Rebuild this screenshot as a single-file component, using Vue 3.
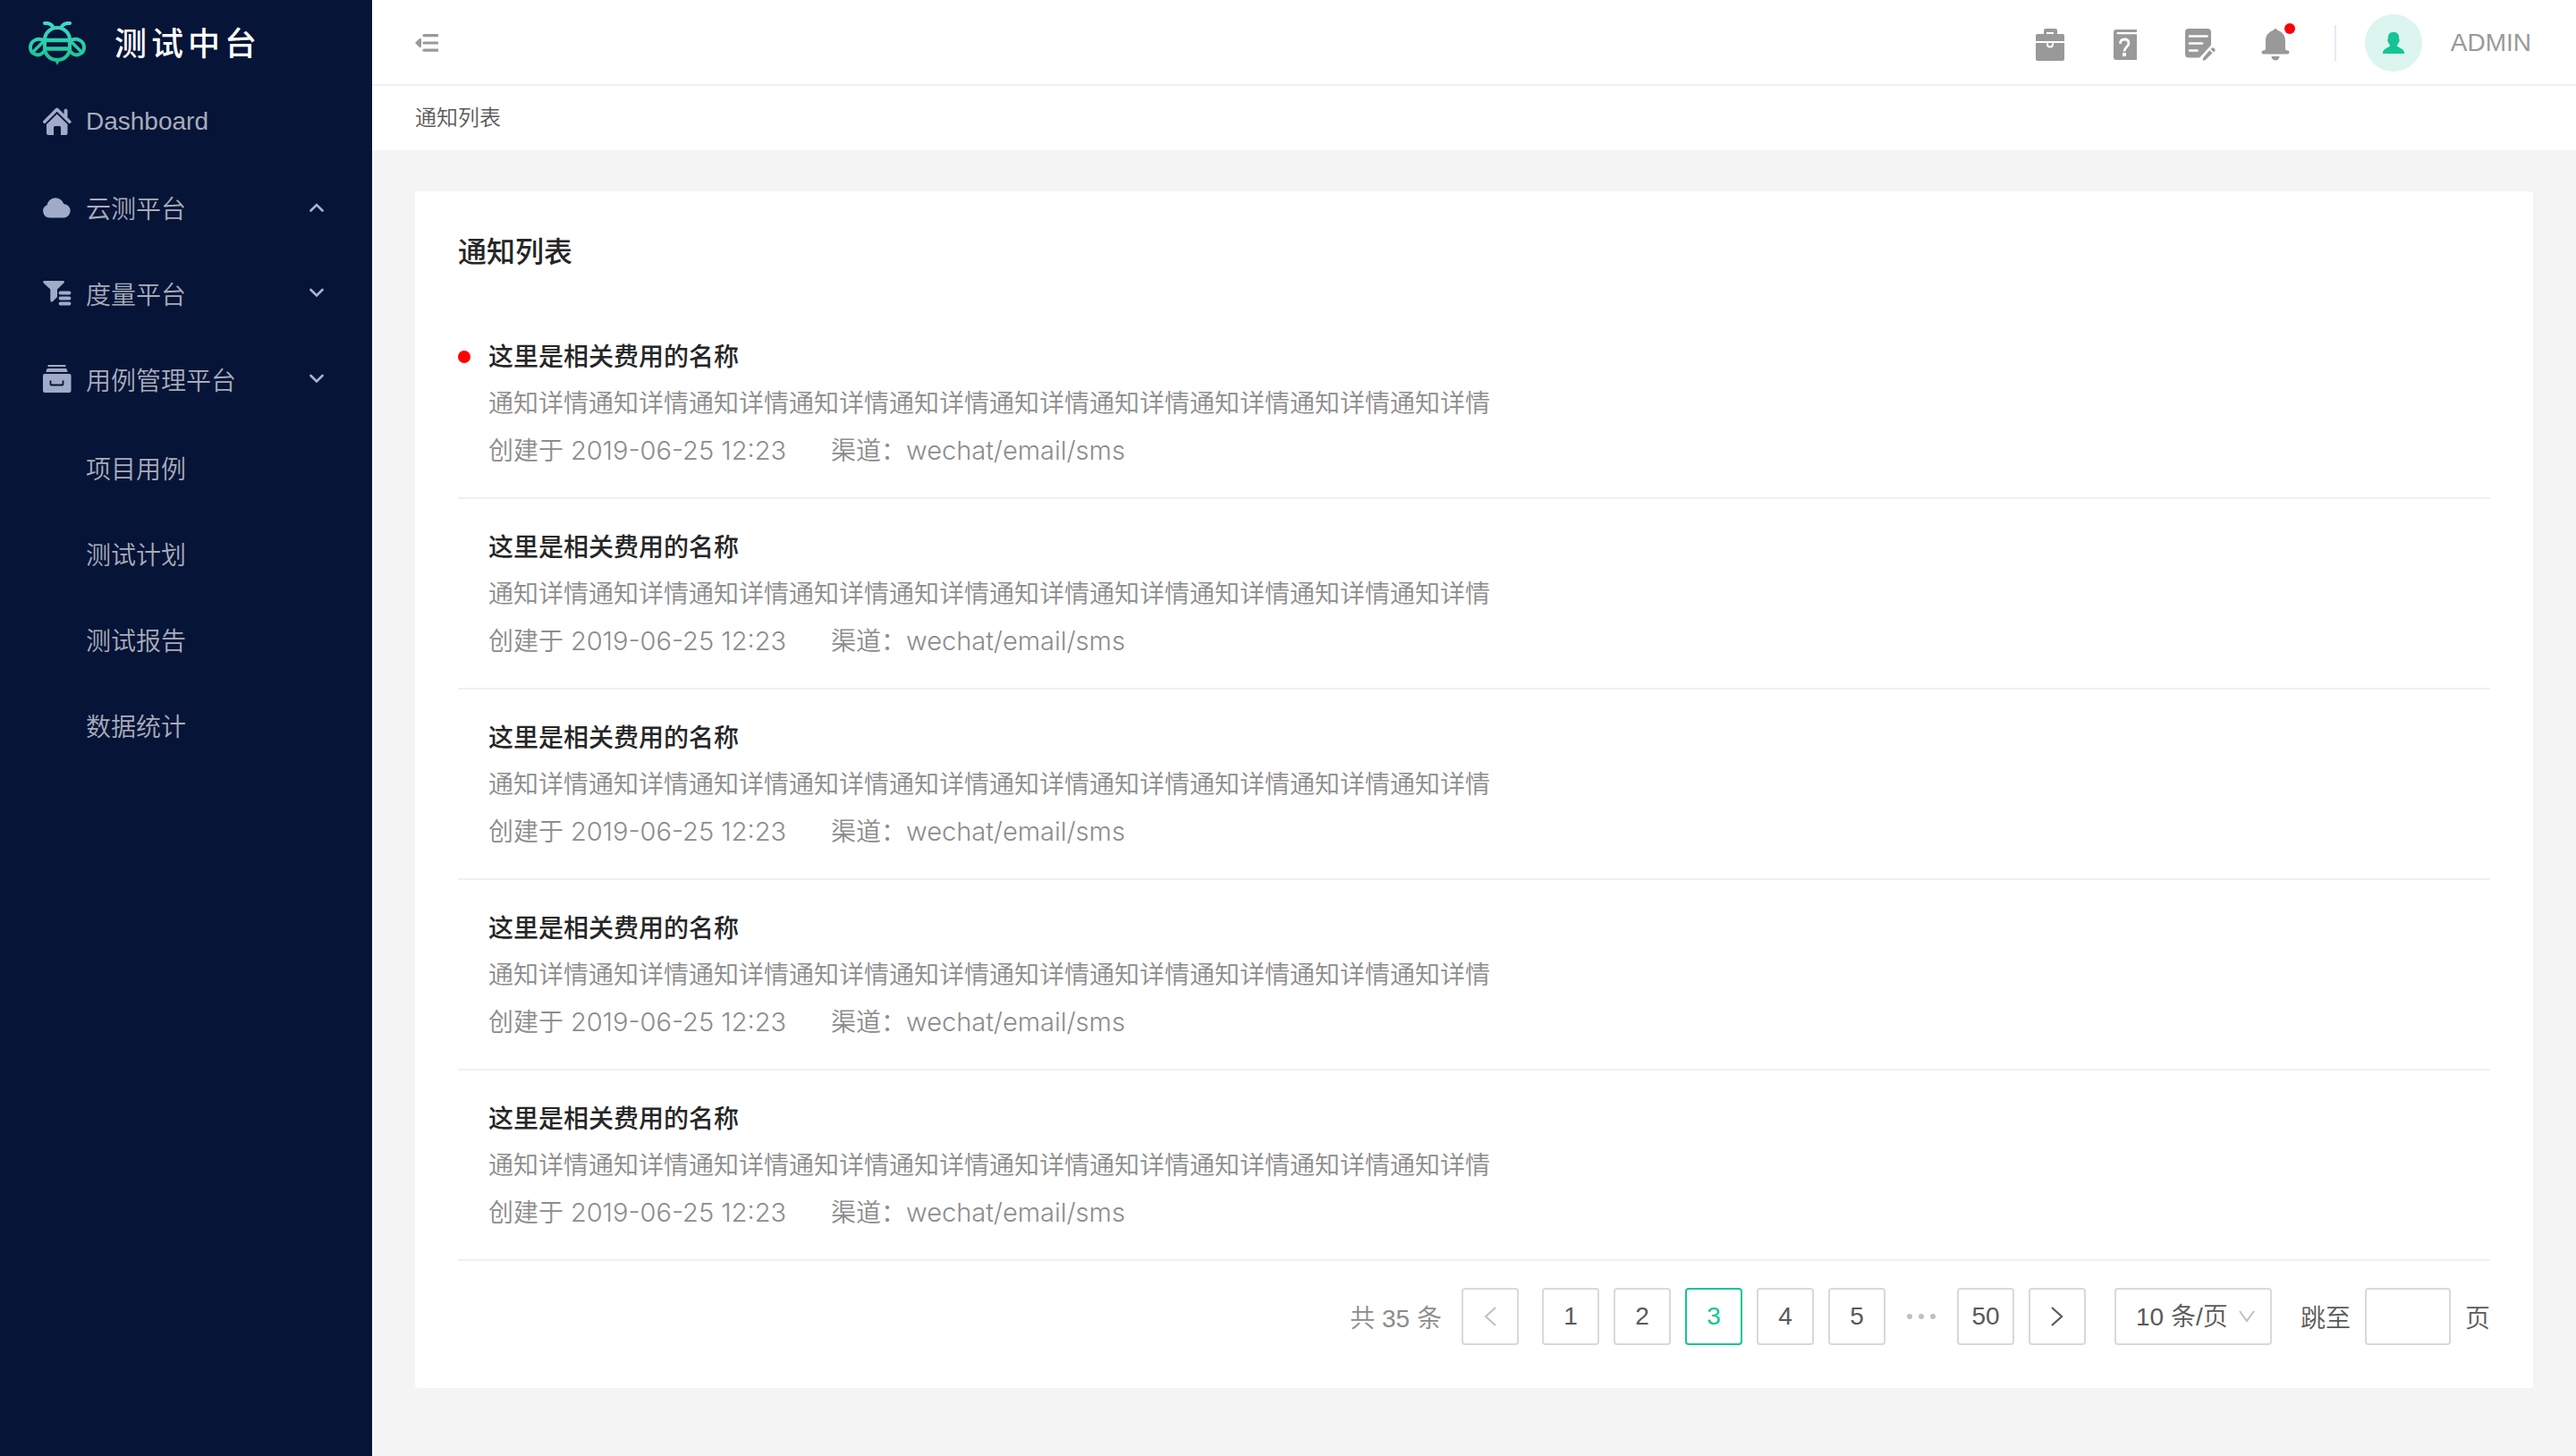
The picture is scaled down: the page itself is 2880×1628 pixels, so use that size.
<script setup>
import { ref } from 'vue'

const groups = [
  { label: 'Dashboard', icon: 'home' },
  { label: '云测平台', icon: 'cloud', arrow: 'up' },
  { label: '度量平台', icon: 'filter', arrow: 'down' },
  { label: '用例管理平台', icon: 'box', arrow: 'down' }
]
const children = ['项目用例', '测试计划', '测试报告', '数据统计']

const notices = Array.from({ length: 5 }, (_, i) => ({
  id: i + 1,
  unread: i === 0,
  title: '这里是相关费用的名称',
  detail: '通知详情'.repeat(10),
  time: '2019-06-25 12:23',
  channel: 'wechat/email/sms'
}))

const current = ref(3)
const pages = [1, 2, 3, 4, 5]
const pageSize = ref('10')
const jump = ref('')
</script>

<template>
  <div class="layout">
    <aside class="sidebar">
      <div class="brand">
        <svg class="bee" width="64" height="49" viewBox="0 0 64 49" fill="none" aria-hidden="true">
          <defs>
            <linearGradient id="bee" gradientUnits="userSpaceOnUse" x1="32" y1="0" x2="32" y2="49">
              <stop offset="0" stop-color="#42d8cb" />
              <stop offset="1" stop-color="#14c38a" />
            </linearGradient>
          </defs>
          <g stroke="url(#bee)" stroke-width="4" stroke-linecap="round">
            <path d="M18 20.5a14 13.5 0 0 1 28 0V30a14 13 0 0 1-28 0z" />
            <path d="M18 21h28M18 30.500h28" stroke-width="4.500" />
            <path d="M18 2c5-.5 8 1 9.500 5M46 2c-5-.5-8 1-9.500 5" />
            <path d="M18 21.500c-8-4-16 0-16 7.500s10 12.500 16 3.500M46 21.500c8-4 16 0 16 7.500s-10 12.500-16 3.500" />
            <path d="M6 33l10-10M58 33L48 23" stroke-width="3.500" />
          </g>
          <path d="M29.500 44h5L32 49z" fill="url(#bee)" />
        </svg>
        <span class="brand-name">测试中台</span>
      </div>

      <nav class="menu">
        <a v-for="g in groups" :key="g.label" class="menu-item" href="#">
          <svg class="menu-icon" width="32" height="32" viewBox="0 0 32 32" aria-hidden="true">
            <template v-if="g.icon === 'home'">
              <path d="M1.800 16.200L15.700 2.300 29.800 16.200" fill="none" stroke="currentColor" stroke-width="3.600" stroke-linecap="round" stroke-linejoin="round" />
              <path d="M24 8V3.500a1.500 1.500 0 0 1 3 0V11z" fill="currentColor" stroke="currentColor" />
              <path d="M4 19L15.700 7.500 27.500 19v10a2 2 0 0 1-2 2H20v-8.500a1.500 1.500 0 0 0-1.500-1.500h-5a1.500 1.500 0 0 0-1.500 1.500V31H6a2 2 0 0 1-2-2z" fill="currentColor" />
            </template>
            <path v-else-if="g.icon === 'cloud'" d="M7.500 27.500a7.500 7.500 0 0 1-3-14.300A9.700 9.700 0 0 1 23.300 12a7.800 7.800 0 0 1 .7 15.500z" fill="currentColor" />
            <template v-else-if="g.icon === 'filter'">
              <path d="M1.500 2h21c1.500 0 1.700 1.500.8 2.400L16 11.500V20l-5 5c-1.200 1-2.700.5-2.700-1V11.500L.7 4.400C-.2 3.500.2 2 1.500 2z" fill="currentColor" />
              <path d="M19.500 15.500h10M19.500 21.500h10M19.500 27.500h10" stroke="currentColor" stroke-width="3.800" stroke-linecap="round" />
            </template>
            <template v-else>
              <path d="M7 0h17a1 1 0 0 1 1 2H6a1 1 0 0 1 1-2zM5.500 4h20c1 0 2 2 2 4h-24c0-2 1-4 2-4z" fill="currentColor" />
              <path d="M2 10h27.500a2 2 0 0 1 2 2v17a2 2 0 0 1-2 2H2a2 2 0 0 1-2-2V12a2 2 0 0 1 2-2z" fill="currentColor" />
              <path d="M8.500 17.500v4a1 1 0 0 0 1 1h12a1 1 0 0 0 1-1v-4" fill="none" stroke="#061438" stroke-width="1.800" />
            </template>
          </svg>
          <span class="menu-label">{{ g.label }}</span>
          <svg v-if="g.arrow" width="16" height="12" viewBox="0 0 16 12" fill="none" aria-hidden="true">
            <path :d="g.arrow === 'up' ? 'M1.500 9.500L8 3l6.500 6.500' : 'M1.500 2L8 8.500 14.500 2'" stroke="#a9b4cb" stroke-width="2.600" stroke-linecap="round" />
          </svg>
        </a>
        <div class="submenu">
          <a v-for="c in children" :key="c" class="menu-item sub" href="#">{{ c }}</a>
        </div>
      </nav>
    </aside>

    <div class="main">
      <header class="topbar">
        <button class="icon-btn fold" type="button" aria-label="收起菜单">
          <svg width="26" height="20" viewBox="0 0 26 20" aria-hidden="true">
            <path d="M0 10l4.500-4.600C5.800 4.300 7 5 7 6.500v7c0 1.500-1.200 2.200-2.500 1.100z" fill="#999" />
            <path d="M10 1.700h15M10 10h15M10 18.200h15" stroke="#999" stroke-width="3.200" stroke-linecap="round" />
          </svg>
        </button>
        <div class="tools">
          <button class="icon-btn" type="button" aria-label="工具">
            <svg width="32" height="36" viewBox="0 0 32 36" aria-hidden="true">
              <path fill="#999" fill-rule="evenodd" d="M11 0h11a2 2 0 0 1 2 2v4h6a2 2 0 0 1 2 2v6H0V8a2 2 0 0 1 2-2h7V2a2 2 0 0 1 2-2zm1 4v2h8V4z" />
              <path fill="#999" d="M0 16h32v18a2 2 0 0 1-2 2H2a2 2 0 0 1-2-2z" />
              <path d="M13 15v2.500a3 3 0 0 0 6 0V15" fill="none" stroke="#fff" stroke-width="2" />
            </svg>
          </button>
          <button class="icon-btn" type="button" aria-label="帮助">
            <svg width="26" height="34" viewBox="0 0 26 34" aria-hidden="true">
              <path fill="#999" d="M3 0h23v3H4.500a1 1 0 0 0 0 2.200H26V34H3a3 3 0 0 1-3-3V3a3 3 0 0 1 3-3z" />
              <path d="M7.500 16c0-3 1.800-5 4.700-5s4.700 1.800 4.700 4.500c0 4-4.900 4.300-4.900 9" fill="none" stroke="#fff" stroke-width="2.800" />
              <path fill="#fff" d="M10 26h4v4h-4z" />
            </svg>
          </button>
          <button class="icon-btn" type="button" aria-label="记录">
            <svg width="34" height="36" viewBox="0 0 34 36" aria-hidden="true">
              <path fill="#999" d="M4 0h21a4 4 0 0 1 4 4v14.500L17.500 31c-1 1.200-2 1.500-3 1.500H4a4 4 0 0 1-4-4V4a4 4 0 0 1 4-4z" />
              <path d="M5 8.500h19.500M5 16.500h14M5 24.500h8.500" stroke="#fff" stroke-width="2.600" stroke-linecap="round" />
              <path fill="#999" d="M27.300 24.200l3.200 3.200-7.300 7.200c-1.200 1-2.400 1.300-3.400 1.100-.2-1.400.2-3 1.300-4.300zM28.500 23l1.600-1.600c1-1 4.600 2 3.400 3.400L32 26.400z" />
            </svg>
          </button>
          <button class="icon-btn" type="button" aria-label="通知">
            <svg width="32" height="36" viewBox="0 0 32 36" aria-hidden="true">
              <path fill="#999" d="M16 0c1 0 1.500.8 2.200 1.800C23.500 3.500 27 7.800 27 13v10c0 1 1 1.200 3 1.500 2 .5 2 4-.5 4H2.500c-2.500 0-2.500-3.500-.5-4 2-.3 3-.5 3-1.500V13C5 7.800 8.500 3.500 13.800 1.800 14.500.8 15 0 16 0zM11.500 31h9c-.3 2.500-2 4.500-4.500 4.500s-4.200-2-4.500-4.500z" />
            </svg>
            <span class="badge"></span>
          </button>
        </div>
        <span class="divider"></span>
        <a class="user" href="#">
          <span class="avatar">
            <svg width="24" height="24" viewBox="0 0 24 24" aria-hidden="true">
              <path fill="#15c495" d="M12 0c4 0 6 2 6 5.500 0 1 .2 2 .6 3.200.4 1.500-.6 2.300-1 3.300-.6 1.500-1.600 2-1.600 3 0 2 8 3 8 8v1H0v-1c0-5 8-6 8-8 0-1-1-1.500-1.600-3-.4-1-1.400-1.800-1-3.300.4-1.200.6-2.200.6-3.200C6 2 8 0 12 0z" />
            </svg>
          </span>
          <span>ADMIN</span>
        </a>
      </header>

      <div class="crumb">通知列表</div>

      <main class="content">
        <section class="card">
          <h1 class="card-title">通知列表</h1>
          <ul class="list">
            <li v-for="n in notices" :key="n.id" class="item">
              <span v-if="n.unread" class="dot"></span>
              <h2 class="item-title">{{ n.title }}</h2>
              <p class="item-text">{{ n.detail }}</p>
              <p class="item-text meta">
                <span>创建于 <span class="latin">{{ n.time }}</span></span>
                <span>渠道：<span class="latin">{{ n.channel }}</span></span>
              </p>
            </li>
          </ul>

          <div class="pager">
            <span class="total">共 35 条</span>
            <button class="page prev" type="button" aria-label="上一页">
              <svg width="14" height="22" viewBox="0 0 14 22" fill="none" aria-hidden="true"><path d="M13 1L2 11l11 10" stroke="#bfbfbf" stroke-width="2" /></svg>
            </button>
            <button v-for="p in pages" :key="p" class="page" :class="{ active: p === current }" type="button" @click="current = p">{{ p }}</button>
            <span class="more"><i></i><i></i><i></i></span>
            <button class="page" type="button">50</button>
            <button class="page" type="button" aria-label="下一页">
              <svg width="14" height="22" viewBox="0 0 14 22" fill="none" aria-hidden="true"><path d="M1 1l11 10L1 21" stroke="#595959" stroke-width="2.200" /></svg>
            </button>
            <span class="size">
              <select v-model="pageSize" aria-label="每页条数">
                <option value="10">10 条/页</option>
                <option value="20">20 条/页</option>
              </select>
              <svg class="caret" width="18" height="14" viewBox="0 0 18 14" fill="none" aria-hidden="true"><path d="M1 1l8 11 8-11" stroke="#bfbfbf" stroke-width="2" /></svg>
            </span>
            <label class="jump">
              <span>跳至</span>
              <input v-model="jump" type="text" />
              <span>页</span>
            </label>
          </div>
        </section>
      </main>
    </div>
  </div>
</template>

<style>
body {
  margin: 0;
  background: #f4f4f4;
}
</style>

<style scoped>
.layout {
  display: flex;
  min-height: 100vh;
  font-family: "Liberation Sans", "Noto Sans CJK SC", sans-serif;
  font-size: 28px;
  color: #595959;
  background: #f4f4f4;
}
.layout * {
  box-sizing: border-box;
}
a {
  color: inherit;
  text-decoration: none;
}
button,
input,
select {
  font: inherit;
  color: inherit;
}
svg {
  display: block;
  flex: none;
}

.sidebar {
  flex: none;
  width: 416px;
  background: #061438;
  color: #a8adb8;
}
.brand {
  display: flex;
  align-items: center;
  gap: 32px;
  height: 96px;
  padding-left: 32px;
  color: #fff;
}
.brand-name {
  padding-bottom: 4px;
  font-size: 36px;
  font-weight: 500;
  letter-spacing: 5px;
}
.menu {
  display: flex;
  flex-direction: column;
  margin-top: -8px;
  font-weight: 350;
}
.menu-item {
  display: flex;
  align-items: center;
  height: 96px;
  padding: 0 54px 0 48px;
}
.menu-icon {
  color: #9fabc7;
}
.menu-label {
  flex: 1;
  margin-left: 16px;
}
.submenu {
  padding-top: 3px;
}
.menu-item.sub {
  padding-left: 96px;
}

.main {
  flex: 1;
  min-width: 0;
}
.topbar {
  display: flex;
  align-items: center;
  height: 96px;
  padding: 0 50px 0 48px;
  background: #fff;
  box-shadow: inset 0 -2px #f0f0f0;
  color: #999;
}
.icon-btn {
  position: relative;
  display: flex;
  align-items: center;
  justify-content: center;
  width: 36px;
  height: 36px;
  padding: 0;
  border: 0;
  background: none;
}
.fold {
  width: 26px;
}
.tools {
  display: flex;
  gap: 48px;
  margin: 4px 48px 0 auto;
}
.badge {
  position: absolute;
  top: -6px;
  right: -4px;
  width: 12px;
  height: 12px;
  border-radius: 50%;
  background: #f00;
}
.divider {
  width: 2px;
  height: 40px;
  margin-right: 32px;
  background: #e4e9f4;
}
.user {
  display: flex;
  align-items: center;
  gap: 32px;
}
.avatar {
  display: flex;
  align-items: center;
  justify-content: center;
  width: 64px;
  height: 64px;
  border-radius: 50%;
  background: #dcf5ee;
}
.crumb {
  height: 72px;
  padding: 0 48px;
  background: #fff;
  font-size: 24px;
  font-weight: 350;
  line-height: 72px;
}

.content {
  padding: 46px 48px 48px;
}
.card {
  padding: 44px 48px 48px;
  border-radius: 4px;
  background: #fff;
}
.card-title {
  margin: 0 0 39px;
  font-size: 32px;
  line-height: 48px;
  font-weight: 500;
  color: #262626;
}
.list {
  margin: 0;
  padding: 0;
  list-style: none;
}
.item {
  position: relative;
  padding: 29px 0 26px 34px;
  border-bottom: 2px solid #f0f0f0;
  line-height: 52px;
}
.dot {
  position: absolute;
  top: 47px;
  left: 0;
  width: 14px;
  height: 14px;
  border-radius: 50%;
  background: #f00;
}
.item-title {
  margin: 0;
  font-size: 28px;
  line-height: 52px;
  font-weight: 500;
  color: #262626;
}
.item-text {
  margin: 0;
  font-weight: 350;
  color: #8c8c8c;
}
.meta {
  display: flex;
  gap: 50px;
  font-family: Inter, "Noto Sans CJK SC", sans-serif;
}
.latin {
  font-size: 29px;
  line-height: 1;
}

.pager {
  display: flex;
  align-items: center;
  justify-content: flex-end;
  gap: 16px;
  margin-top: 30px;
  font-weight: 350;
}
.total {
  margin-right: 6px;
  color: #8c8c8c;
}
.page {
  display: flex;
  align-items: center;
  justify-content: center;
  width: 64px;
  height: 64px;
  padding: 0;
  border: 2px solid #d9d9d9;
  border-radius: 4px;
  background: #fff;
}
.prev {
  margin-right: 10px;
}
.active {
  border-color: #15c495;
  color: #15c495;
}
.more {
  display: flex;
  justify-content: center;
  gap: 7px;
  width: 48px;
}
.more i {
  width: 6px;
  height: 6px;
  border-radius: 50%;
  background: #bfbfbf;
}
.size {
  position: relative;
  margin: 0 16px;
}
.size select {
  display: block;
  width: 176px;
  height: 64px;
  padding: 0 22px;
  border: 2px solid #d9d9d9;
  border-radius: 4px;
  background: #fff;
  appearance: none;
}
.caret {
  position: absolute;
  top: 25px;
  right: 19px;
  pointer-events: none;
}
.jump {
  display: flex;
  align-items: center;
  gap: 16px;
}
.jump input {
  width: 96px;
  height: 64px;
  padding: 0 16px;
  border: 2px solid #d9d9d9;
  border-radius: 4px;
  background: #fff;
}
</style>
